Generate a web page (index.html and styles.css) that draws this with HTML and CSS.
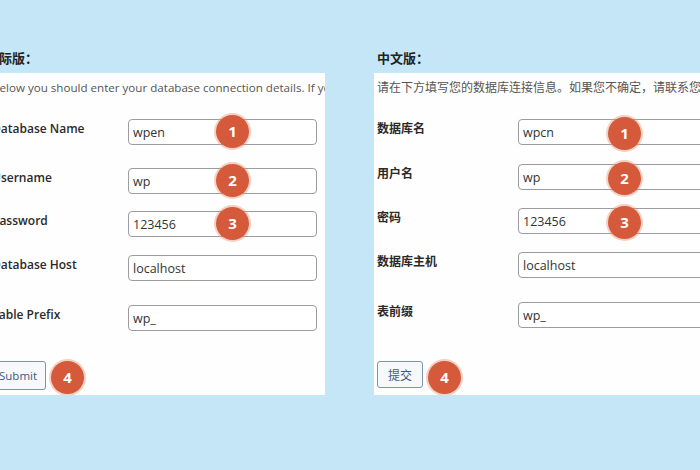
FILE: index.html
```html
<!DOCTYPE html>
<html lang="zh-CN">
  <head>
    <meta charset="UTF-8" />
    <title>WordPress 数据库配置</title>
    <link rel="stylesheet" href="styles.css">
  </head>
  <body>
    <div class="page">

      <div class="column column-en">
        <h2 class="title">国际版：</h2>
        <div class="panel panel-en">
          <p class="intro">Below you should enter your database connection details. If you're not sure about these, contact your host.</p>
          <div class="form-grid">
            <label>Database Name</label>
            <div class="field">
              <input type="text" value="wpen" />
              <span class="badge">1</span>
            </div>
            <label>Username</label>
            <div class="field">
              <input type="text" value="wp" />
              <span class="badge">2</span>
            </div>
            <label>Password</label>
            <div class="field">
              <input type="text" value="123456" />
              <span class="badge">3</span>
            </div>
            <label>Database Host</label>
            <div class="field">
              <input type="text" value="localhost" />
            </div>
            <label>Table Prefix</label>
            <div class="field">
              <input type="text" value="wp_" />
            </div>
          </div>
          <div class="actions">
            <button class="button">Submit</button>
            <span class="badge badge-inline">4</span>
          </div>
        </div>
      </div>

      <div class="column column-cn">
        <h2 class="title">中文版：</h2>
        <div class="panel panel-cn">
          <p class="intro">请在下方填写您的数据库连接信息。如果您不确定，请联系您的服务提供商。</p>
          <div class="form-grid">
            <label>数据库名</label>
            <div class="field">
              <input type="text" value="wpcn" />
              <span class="badge">1</span>
            </div>
            <label>用户名</label>
            <div class="field">
              <input type="text" value="wp" />
              <span class="badge">2</span>
            </div>
            <label>密码</label>
            <div class="field">
              <input type="text" value="123456" />
              <span class="badge">3</span>
            </div>
            <label>数据库主机</label>
            <div class="field">
              <input type="text" value="localhost" />
            </div>
            <label>表前缀</label>
            <div class="field">
              <input type="text" value="wp_" />
            </div>
          </div>
          <div class="actions">
            <button class="button">提交</button>
            <span class="badge badge-inline">4</span>
          </div>
        </div>
      </div>

    </div>
  </body>
</html>
```

FILE: styles.css
```css
body {
  margin: 0;
  background: #c5e6f6;
  font-family: "Open Sans", "Noto Sans CJK SC", sans-serif;
  color: #333;
  overflow: hidden;
}

.page {
  display: flex;
  gap: 49px;
  padding-top: 48px;
}

.column {
  flex: none;
  width: 336px;
}

.column-en {
  margin-left: -11px;
}

.title {
  margin: 0 0 5px;
  padding-left: 3px;
  font-size: 13px;
  line-height: 20px;
  font-weight: 700;
  color: #222;
  white-space: nowrap;
}

.column-en .title {
  padding-left: 0;
  margin-left: -3px;
}

.panel {
  background: #fefefe;
  padding: 5px 8px 0 3px;
  overflow: hidden;
}

.intro {
  margin: 0 0 21px;
  font-size: 12px;
  line-height: 20px;
  color: #555;
  white-space: nowrap;
}

.panel-en .intro {
  font-size: 11.6px;
}

.form-grid {
  display: grid;
  grid-template-columns: 136px 189px;
  align-items: start;
}

.panel-en .form-grid {
  grid-template-rows: 49px 43px 44px 50px auto;
}

.panel-cn .form-grid {
  grid-template-columns: 141px 189px;
  grid-template-rows: 45px 44px 44px 50px auto;
}

label {
  font-size: 12px;
  line-height: 20px;
  font-weight: 600;
  color: #2a2a2a;
  white-space: nowrap;
}

.panel-cn label {
  font-weight: 700;
}

.field {
  position: relative;
}

input[type="text"] {
  display: block;
  box-sizing: border-box;
  width: 189px;
  height: 26px;
  margin: 0;
  padding: 0 4px;
  border: 1px solid #9a9ca0;
  border-radius: 4px;
  background: #fff;
  font-family: inherit;
  font-size: 12.5px;
  color: #333;
}

.badge {
  position: absolute;
  top: -4px;
  left: 88px;
  width: 33px;
  height: 33px;
  border-radius: 50%;
  background: #d5593b;
  box-shadow: 0 0 0 2px rgba(236, 150, 120, 0.45);
  color: #fff;
  font-size: 15px;
  font-weight: 700;
  line-height: 33px;
  text-align: center;
}

.panel-cn .badge {
  left: 90px;
  top: -2px;
}

.actions {
  display: flex;
  align-items: flex-start;
  gap: 5px;
  height: 34px;
  margin-top: 30px;
}

.panel-cn .actions {
  margin-top: 33px;
}

.button {
  height: 29px;
  padding: 0 8px;
  border: 1px solid #7f93aa;
  border-radius: 3px;
  background: #f7f8fa;
  color: #3b5b86;
  font-family: inherit;
  font-size: 11.5px;
}

.panel-en .button {
  margin-left: -2px;
}

.panel-cn .button {
  height: 27px;
  padding: 0 10px;
  font-size: 12px;
}

.badge-inline {
  position: static;
  flex: none;
  width: 33px;
  height: 33px;
  line-height: 33px;
}
```
